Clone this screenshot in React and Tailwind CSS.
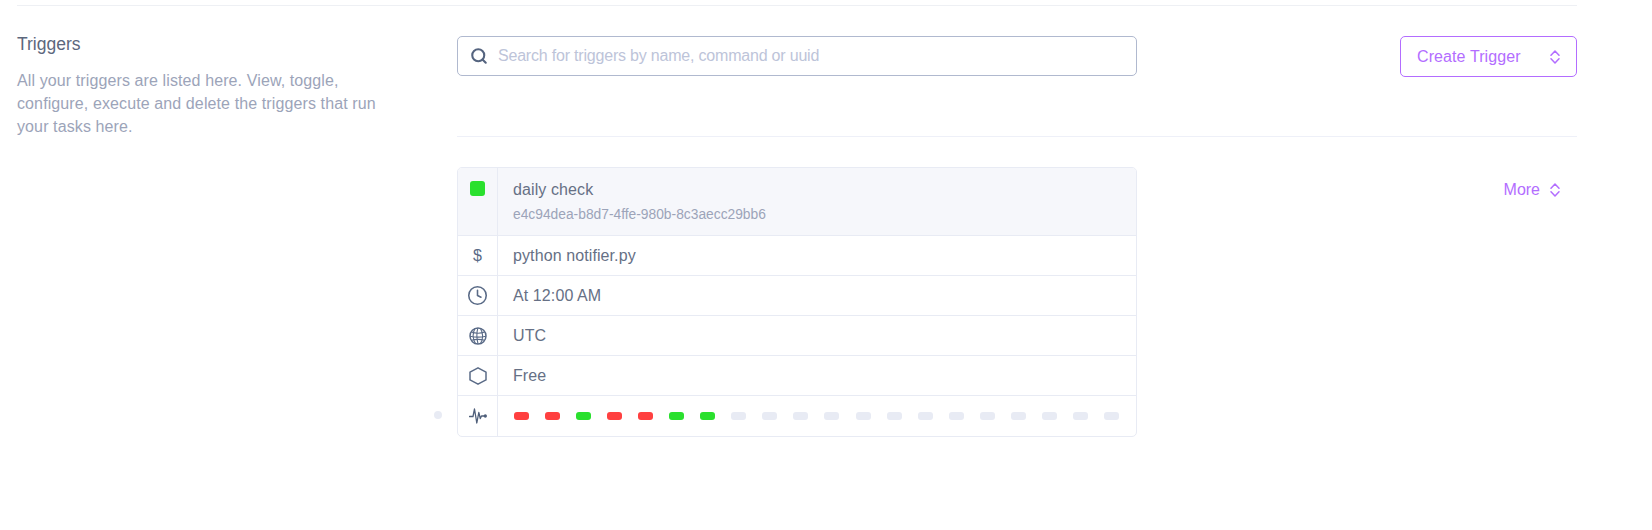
import React from "react";
import { Search, Clock } from "lucide-react";

const Chevrons = ({ className }) => (
  <svg viewBox="0 0 10 14" className={className} fill="none" stroke="currentColor" strokeWidth="1.5" strokeLinecap="round" strokeLinejoin="round">
    <path d="M1 5.200L5 1l4 4.200" />
    <path d="M1 8.800L5 13l4-4.200" />
  </svg>
);

const Globe = () => (
  <svg viewBox="0 0 18 18" className="w-[18px] h-[18px] text-[#5a6b87]" fill="none" stroke="currentColor" strokeWidth="1.100">
    <circle cx="9" cy="9" r="8" strokeWidth="1.500" />
    <path d="M6 1.500C3.500 6 3.800 12 6.500 16.500M11.500 1.500C14 6 14.200 12 11.500 16.500M8.800 1.200C7.500 6 7.800 12 9 16.800" />
    <path d="M2.300 5c4 1.400 9.500 1.400 13.400 0M1 9.200c5 1.200 11 1.200 16 0M2.300 13.200c4-1 9.500-1 13.400 0" />
  </svg>
);

const Hex = () => (
  <svg viewBox="0 0 18 18" className="w-[18px] h-[18px] text-[#5a6b87]" fill="none" stroke="currentColor" strokeWidth="1.500" strokeLinejoin="round">
    <path d="M9 0.800l8 4.300v7.800l-8 4.300-8-4.300V5.100z" />
  </svg>
);

const Pulse = () => (
  <svg viewBox="0 0 18 16" className="w-[18px] h-4 text-[#4f5f7a]" fill="none" stroke="currentColor" strokeWidth="1.300" strokeLinejoin="round" strokeLinecap="round">
    <path d="M0.500 8.500H4L5.500 1 7.800 15 9.800 4.500 11.300 10.500 12.500 8H16.500" />
    <circle cx="16.300" cy="8" r="1" fill="currentColor" />
  </svg>
);

const Row = ({ icon, children }) => (
  <div className="flex h-10 border-t border-[#e8ebf4]">
    <div className="w-10 shrink-0 border-r border-[#e8ebf4] flex items-center justify-center text-[#5a6b87]">{icon}</div>
    <div className="flex-1 flex items-center pl-[15px] text-[#667085] tracking-[0.1px]">{children}</div>
  </div>
);

const bars = ["r", "r", "g", "r", "r", "g", "g", "x", "x", "x", "x", "x", "x", "x", "x", "x", "x", "x", "x", "x"];

export default function App() {
  return (
    <div className="w-[1652px] h-[530px] bg-white pl-[17px] pr-[75px] pt-[5px] text-base text-[#667085]" style={{ fontFamily: '"Liberation Sans", Arial, sans-serif' }}>
      <div className="border-t border-[#eef0f4] flex pt-[30px]">
        <div className="w-[440px] shrink-0">
          <h2 className="text-[17.500px] leading-[22px] -mt-[3px] text-[#5c677d]">Triggers</h2>
          <p className="mt-[14px] w-[360px] leading-[23px] tracking-[0.11px] text-[#9ca4b9]">
            All your triggers are listed here. View, toggle, configure, execute and delete the triggers that run your tasks here.
          </p>
        </div>
        <div className="flex-1">
          <div className="flex justify-between items-start pb-[59px] border-b border-[#eef0f8]">
            <div className="w-[680px] h-10 border border-[#b0b9cf] rounded-[5px] flex items-center pl-[12px] gap-[10px]">
              <Search className="w-[18px] h-[18px] text-[#55647f]" strokeWidth={2.8} />
              <span className="text-base tracking-[-0.2px] text-[#bdc4d9]">Search for triggers by name, command or uuid</span>
            </div>
            <button className="w-[177px] h-[41px] border border-[#b36dff] rounded-[5px] flex items-center justify-between pl-4 pr-4 text-[#b36dff] tracking-[0.1px]">
              <span>Create Trigger</span>
              <Chevrons className="w-[10px] h-[14px]" />
            </button>
          </div>
          <div className="flex justify-between items-start mt-[30px]">
            <div className="relative w-[680px]">
              <div className="absolute left-[-23px] top-[244px] w-2 h-2 rounded-full bg-[#e8ebf4]" />
              <div className="border border-[#e8ebf4] rounded-[5px] overflow-hidden">
                <div className="flex h-[67px] bg-[#f6f7fb]">
                  <div className="w-10 shrink-0 border-r border-[#e8ebf4] flex justify-center pt-[13px]">
                    <div className="w-[15px] h-[15px] rounded-[3px] bg-[#2ae02e]" />
                  </div>
                  <div className="pl-[15px] pt-[11px]">
                    <div className="leading-[22px] tracking-[0.1px] text-[#667085]">daily check</div>
                    <div className="text-[13.800px] leading-[20px] mt-[4px] text-[#9ca4b9]">e4c94dea-b8d7-4ffe-980b-8c3aecc29bb6</div>
                  </div>
                </div>
                <Row icon={<span className="text-base">$</span>}>python notifier.py</Row>
                <Row icon={<Clock className="w-[21px] h-[21px]" strokeWidth={1.800} />}>At 12:00 AM</Row>
                <Row icon={<Globe />}>UTC</Row>
                <Row icon={<Hex />}>Free</Row>
                <div className="flex h-[41px] border-t border-[#e8ebf4]">
                  <div className="w-10 shrink-0 border-r border-[#e8ebf4] flex items-center justify-center"><Pulse /></div>
                  <div className="flex-1 flex items-center justify-between pl-4 pr-[17px]">
                    {bars.map((b, i) => (
                      <div key={i} className={`w-[15px] h-2 rounded-[3px] ${b === "r" ? "bg-[#ff4040]" : b === "g" ? "bg-[#2ae02e]" : "bg-[#e8ebf4]"}`} />
                    ))}
                  </div>
                </div>
              </div>
            </div>
            <button className="flex items-center gap-[10px] mt-[13px] mr-[17px] text-[#b36dff] leading-[20px]">
              <span>More</span>
              <Chevrons className="w-[10px] h-[14px]" />
            </button>
          </div>
        </div>
      </div>
    </div>
  );
}
